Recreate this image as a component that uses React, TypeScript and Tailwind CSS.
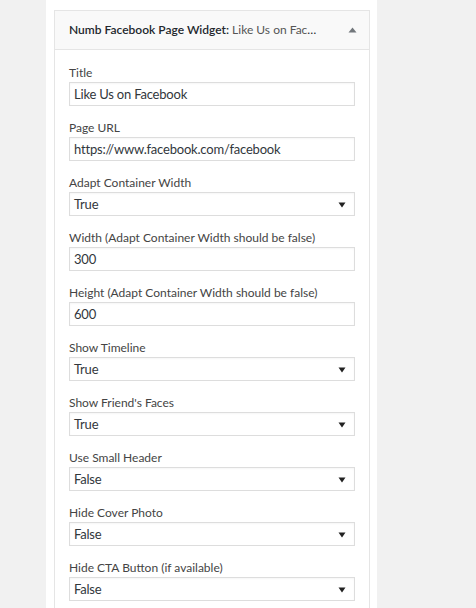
const fields: { label: string; value: string; select?: boolean }[] = [
  { label: 'Title', value: 'Like Us on Facebook' },
  { label: 'Page URL', value: 'https://www.facebook.com/facebook' },
  { label: 'Adapt Container Width', value: 'True', select: true },
  { label: 'Width (Adapt Container Width should be false)', value: '300' },
  { label: 'Height (Adapt Container Width should be false)', value: '600' },
  { label: 'Show Timeline', value: 'True', select: true },
  { label: "Show Friend's Faces", value: 'True', select: true },
  { label: 'Use Small Header', value: 'False', select: true },
  { label: 'Hide Cover Photo', value: 'False', select: true },
  { label: 'Hide CTA Button (if available)', value: 'False', select: true },
];

function Field({ label, value, select }: { label: string; value: string; select?: boolean }) {
  return (
    <div className="flex flex-col">
      <label className="h-[19px] text-[12px] leading-[19px] text-[#444]">{label}</label>
      <div className="flex h-[24px] items-center justify-between border border-[#ddd] bg-white pl-[4px] pr-[8px] text-[13px] tracking-[-0.2px] text-[#32373c] shadow-[inset_0_1px_2px_rgba(0,0,0,0.04)]">
        <span className="leading-none">{value}</span>
        {select && (
          <svg width="8" height="6" viewBox="0 0 8 6" className="mt-[1px]">
            <path d="M0.5 0.5 L7.5 0.5 L4 5.5 Z" fill="#222" />
          </svg>
        )}
      </div>
    </div>
  );
}

export default function App() {
  return (
    <div className="min-h-[608px] bg-[#f1f1f1] pl-[46px] font-['Lato',sans-serif]">
      <div className="min-h-[608px] w-[331px] bg-white pl-[8px] pr-[7px] pt-[10px]">
        <div className="min-h-[598px] border border-b-0 border-[#e5e5e5]">
          {/* widget header */}
          <div className="flex h-[39px] items-center justify-between border-b border-[#e5e5e5] bg-[#f9f9f9] pl-[14px] pr-[12px]">
            <h3 className="w-[250px] truncate text-[12px] text-[#23282d]">
              <span className="font-semibold">Numb Facebook Page Widget:</span>
              <span className="text-[#555]"> Like Us on Facebook</span>
            </h3>
            <svg width="9" height="6" viewBox="0 0 9 6">
              <path d="M0.5 5.5 L8.5 5.5 L4.5 0.5 Z" fill="#72777c" />
            </svg>
          </div>
          {/* widget body */}
          <div className="flex flex-col gap-[12px] px-[14px] pt-[13px]">
            {fields.map((f) => (
              <Field key={f.label} {...f} />
            ))}
          </div>
        </div>
      </div>
    </div>
  );
}
